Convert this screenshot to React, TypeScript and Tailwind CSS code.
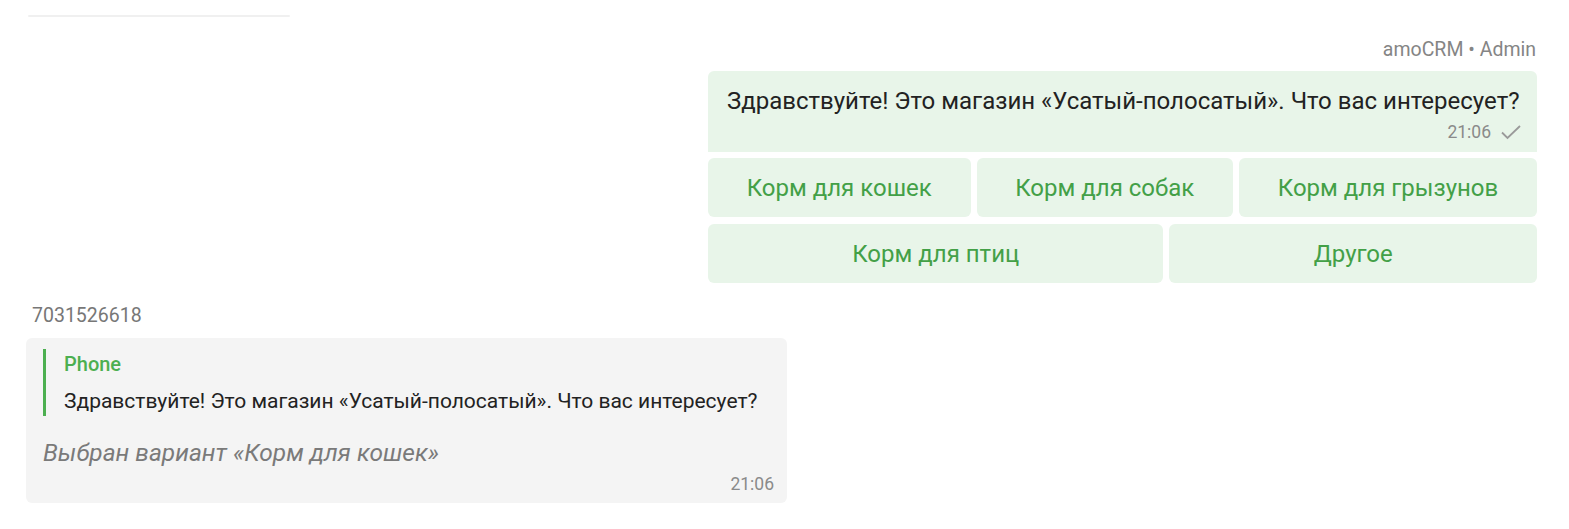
import React from "react";

const Btn = ({ label }: { label: string }) => (
  <div className="flex-auto h-[59px] rounded-[6px] bg-[#e8f5e9] flex items-center justify-center text-[24px] text-[#43a047]">
    {label}
  </div>
);

export default function App() {
  return (
    <div className="w-[1569px] h-[529px] bg-white overflow-hidden font-['Roboto',sans-serif] relative">
      <div className="ml-[28px] mt-[15px] w-[262px] h-[2px] rounded-full bg-[#f0f0f0]" />
      <div className="flex flex-col items-end pr-[32px] mt-[21px]">
        <div className="text-[19.5px] leading-[24px] text-[#858585] mr-[1px]">amoCRM • Admin</div>
        <div className="w-[829px] mt-[9px]">
          <div className="bg-[#e8f5e9] rounded-t-[6px] pl-[19px] pr-[16px] pt-[16px] pb-[10px]">
            <div className="text-[24px] leading-[28px] text-[#222] whitespace-nowrap">
              Здравствуйте! Это магазин «Усатый-полосатый». Что вас интересует?
            </div>
            <div className="flex justify-end items-center gap-[9px] mt-[7px]">
              <span className="text-[17.5px] leading-[20px] text-[#8a8a8a]">21:06</span>
              <svg width="22" height="16" viewBox="0 0 22 16" className="mr-[-1px]">
                <path d="M2 8.5 L7.5 14 L20 2" fill="none" stroke="#9a9a9a" strokeWidth="1.8" />
              </svg>
            </div>
          </div>
          <div className="flex gap-[6px] mt-[6px]">
            <Btn label="Корм для кошек" />
            <Btn label="Корм для собак" />
            <Btn label="Корм для грызунов" />
          </div>
          <div className="flex gap-[6px] mt-[7px]">
            <Btn label="Корм для птиц" />
            <Btn label="Другое" />
          </div>
        </div>
      </div>
      <div className="pl-[26px] mt-[21px]">
        <div className="ml-[6px] text-[19.5px] leading-[24px] text-[#777]">7031526618</div>
        <div className="mt-[10px] w-[761px] bg-[#f4f4f4] rounded-[6px] pl-[17px] pr-[13px] pt-[11px] pb-[9px]">
          <div className="border-l-[3px] border-[#4caf50] pl-[18px] pt-[3px] pb-[2px]">
            <div className="text-[20px] leading-[24px] font-medium text-[#4caf50]">Phone</div>
            <div className="text-[21px] leading-[26px] text-[#222] mt-[12px] whitespace-nowrap">
              Здравствуйте! Это магазин «Усатый-полосатый». Что вас интересует?
            </div>
          </div>
          <div className="mt-[22px] text-[24.5px] leading-[30px] italic text-[#7a7a7a]">Выбран вариант «Корм для кошек»</div>
          <div className="text-right text-[17.5px] leading-[20px] text-[#8a8a8a] mt-[6px]">21:06</div>
        </div>
      </div>
    </div>
  );
}
